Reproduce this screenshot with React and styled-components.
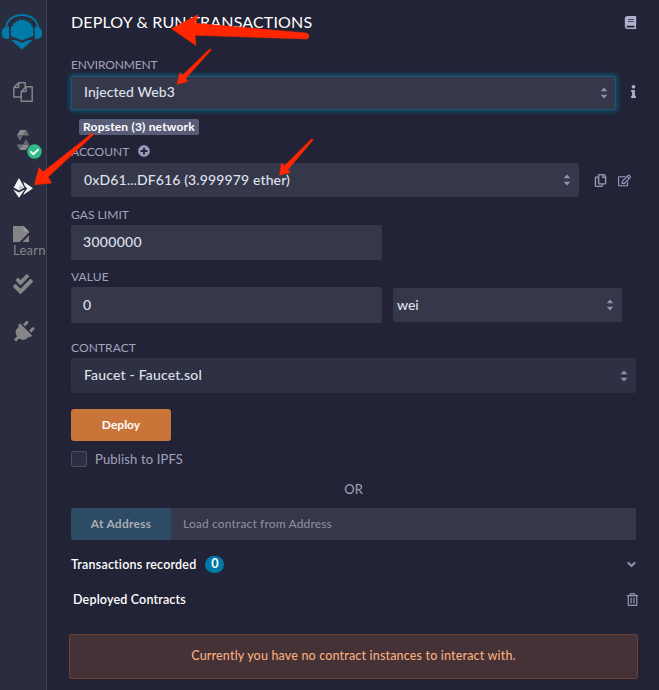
import React from 'react';
import styled, { createGlobalStyle } from 'styled-components';
import {
  FaBook,
  FaInfo,
  FaRegCopy,
  FaRegEdit,
  FaChevronDown,
  FaRegTrashAlt,
  FaPlusCircle,
  FaCheckDouble,
  FaCheckCircle,
  FaPlug,
} from 'react-icons/fa';

const GlobalStyle = createGlobalStyle`
  *, *::before, *::after { box-sizing: border-box; }
  body {
    margin: 0;
    background: #222336;
    font-family: Lato, "Open Sans", sans-serif;
    overflow: hidden;
  }
  svg { display: block; flex: none; }
`;

const Page = styled.div`
  position: relative;
  display: flex;
  width: 659px;
  height: 690px;
  background: #222336;
  color: #dfe1ea;
`;

/* Sidebar */

const Sidebar = styled.nav`
  display: flex;
  flex-direction: column;
  width: 47px;
  flex: none;
  background: #2a2c3f;
  border-right: 1px solid #3f4153;
`;

const LogoSlot = styled.div`
  height: 68px;
  padding: 13px 0 0 1px;
`;

const NavItem = styled.div`
  position: relative;
  display: flex;
  flex-direction: column;
  justify-content: ${(p) => (p.$top ? 'flex-start' : 'center')};
  height: 48px;
  padding-left: 13px;
  padding-top: ${(p) => (p.$top ? 14 : 0)}px;
  color: ${(p) => (p.$active ? '#f4f4f6' : '#858587')};
`;

const NavLabel = styled.span`
  font-size: 13px;
  line-height: 17px;
  letter-spacing: 0.25px;
  white-space: nowrap;
`;

const StatusBadge = styled.span`
  position: absolute;
  left: 27px;
  top: 28px;
  border-radius: 50%;
  color: #32ba89;
  background: radial-gradient(circle, #fff 45%, transparent 50%);
`;

const PlugIcon = styled(FaPlug)`
  transform: translateY(0.5px) rotate(45deg) scale(1.15);
`;

/* Panel */

const Panel = styled.main`
  display: flex;
  flex-direction: column;
  flex: 1;
  padding: 0 21px 0 24px;
`;

const Header = styled.header`
  display: flex;
  align-items: center;
  justify-content: space-between;
  height: 44px;
  padding-right: 3px;
  color: #aeb0cd;
`;

const Title = styled.h1`
  margin: 0;
  padding-bottom: 2px;
  font-size: 16px;
  font-weight: 400;
  letter-spacing: 0.16px;
  color: #fff;
`;

const Label = styled.div`
  display: flex;
  align-items: center;
  gap: 9px;
  height: 16px;
  margin-top: ${(p) => p.$mt || 0}px;
  margin-bottom: ${(p) => p.$mb || 0}px;
  font-size: 12px;
  letter-spacing: ${(p) => p.$ls || 0}px;
  color: #a2a3bd;
`;

const FieldRow = styled.div`
  display: flex;
  align-items: center;
  height: ${(p) => p.$h || 34}px;
`;

const Field = styled.div`
  display: flex;
  align-items: center;
  justify-content: space-between;
  width: ${(p) => p.$w}px;
  height: ${(p) => p.$h || 34}px;
  margin-left: ${(p) => p.$ml || 0}px;
  padding: 0 8px ${(p) => (p.$focus ? 3 : 2)}px ${(p) => (p.$pl === undefined ? 13 : p.$pl)}px;
  border-radius: 2px;
  background: ${(p) => (p.$dark ? '#2e3044' : '#35374b')};
  box-shadow: ${(p) => (p.$focus ? 'inset 0 0 0 1px #22536f, 0 0 4px 2px rgba(0, 122, 166, 0.5)' : 'none')};
  font-size: 14px;
  font-weight: 500;
  letter-spacing: ${(p) => p.$ls || 0}px;
  white-space: nowrap;
`;

const RowIcon = styled.span`
  display: flex;
  margin-left: ${(p) => p.$ml}px;
  margin-top: ${(p) => (p.$bright ? -3 : 0)}px;
  color: ${(p) => (p.$bright ? '#aeb0cd' : '#9297b6')};

  path {
    stroke: currentColor;
    stroke-width: ${(p) => (p.$bright ? 0 : 8)}px;
  }
`;

const NetworkBadge = styled.span`
  display: flex;
  align-items: center;
  justify-content: center;
  align-self: flex-start;
  width: 120px;
  height: 16px;
  margin: 9px 0 0 8px;
  padding-bottom: 1px;
  border-radius: 2px;
  background: #595c76;
  color: #fff;
  font-size: 12px;
  font-weight: 700;
  letter-spacing: 0.19px;
  white-space: nowrap;
`;

const DeployButton = styled.button`
  width: 100px;
  height: 32px;
  margin: 16px 0 0;
  padding: 0 0 2px;
  border: 0;
  border-radius: 3px;
  background: #c97539;
  color: #fff;
  font: 700 12px Lato, sans-serif;
`;

const CheckRow = styled.label`
  display: flex;
  align-items: center;
  gap: 8px;
  height: 16px;
  margin-top: 10px;
  font-size: 13px;
  letter-spacing: 0.16px;
  color: #a2a3bd;
`;

const Box = styled.span`
  width: 16px;
  height: 16px;
  border: 1px solid #4b4e63;
  border-radius: 2px;
  background: #2c2e42;
`;

const Or = styled.div`
  height: 16px;
  margin-top: 14px;
  padding-right: 4px;
  font-size: 13px;
  line-height: 16px;
  text-align: center;
  color: #a2a3bd;
`;

const AddressGroup = styled.div`
  display: flex;
  width: 565px;
  height: 32px;
  margin-top: 11px;
  border-radius: 2px;
  overflow: hidden;
`;

const AddressButton = styled.button`
  width: 100px;
  padding: 0 0 2px;
  border: 0;
  background: #2d4b64;
  color: #a9adb5;
  font: 700 12px Lato, sans-serif;
  letter-spacing: 0.26px;
`;

const AddressInput = styled.div`
  display: flex;
  align-items: center;
  flex: 1;
  padding: 0 0 2px 12px;
  background: #35374b;
  color: #8a8c98;
  font-size: 12px;
  font-weight: 500;
  letter-spacing: 0.13px;
`;

const SectionRow = styled.div`
  display: flex;
  align-items: center;
  height: 18px;
  margin-top: ${(p) => p.$mt}px;
  padding-left: ${(p) => p.$pl || 0}px;
  color: #fff;
  font-size: 12.5px;
  font-weight: 600;
  letter-spacing: ${(p) => p.$ls}px;
`;

const SectionIcon = styled.span`
  margin-left: auto;
  margin-right: ${(p) => p.$mr}px;
  color: #9297b6;

  path {
    stroke: currentColor;
    stroke-width: ${(p) => p.$stroke || 0}px;
  }
`;

const Count = styled.span`
  display: flex;
  align-items: center;
  justify-content: center;
  width: 19px;
  height: 17px;
  margin-left: 9px;
  padding-bottom: 1px;
  border-radius: 9px;
  background: #007aa6;
  font-size: 12.5px;
  font-weight: 700;
  letter-spacing: 0;
`;

const Alert = styled.div`
  display: flex;
  align-items: center;
  justify-content: center;
  width: 569px;
  height: 45px;
  margin: 26px 0 0 -2px;
  padding-bottom: 2px;
  border: 1px solid #6a4235;
  border-radius: 2px;
  background: #443237;
  color: #f8ad7c;
  font-size: 12.5px;
  font-weight: 500;
  letter-spacing: 0.17px;
`;

const SorterIcon = styled.svg`
  margin-top: 2px;
`;

const Overlay = styled.svg`
  position: absolute;
  inset: 0;
  pointer-events: none;
`;

function Logo() {
  return (
    <svg width="42" height="38" viewBox="1 13 42 38" fill="#007aa6">
      <path d="M6 28C7 19.500 13.500 15 22 15S37 19.500 38 28" fill="none" stroke="#007aa6" strokeWidth="1.800" />
      <path d="M9 26.800v12C4.500 39.600 1.600 37.400 1.600 33s2.900-7 7.400-6.200zM34.800 26.800v12c4.500.8 7.400-1.400 7.400-5.800s-2.900-7-7.400-6.200z" />
      <path d="M11 36.200L10.400 33.500 11.200 31.800 9.900 30.200 11.400 28.800 10.900 26.400 12.900 25.700 13.100 23.300 15.200 23.200 16 20.900 18 21.400 19.600 19.300 21.800 20.500 24 19.200 25.700 21.200 27.900 20.700 28.800 22.900 31.100 23.200 31.200 25.600 33.200 26.400 32.700 28.800 34.200 30.200 32.900 31.800 33.700 33.500 33 36.200C29.500 37.500 25.500 38.500 22 40.600 18.500 38.500 14.500 37.500 11 36.200z" />
      <path d="M11 39.800c4 .3 7.500 1 11 3 3.500-2 7-2.700 11-3L22 49.700z" />
    </svg>
  );
}

function FilesIcon() {
  return (
    <svg width="20" height="20" viewBox="0 0 20 20" fill="none" stroke="currentColor" strokeWidth="1.5" strokeLinejoin="round">
      <path d="M8 15H.8V5.600L5.600.8h6.600v4M5.600.8v4.800H.8" />
      <path d="M13 4.800h6.200v14.400H8.200V9.600zM13 4.800v4.800H8.200" />
    </svg>
  );
}

function SolidityIcon() {
  return (
    <svg width="20" height="20" viewBox="0 0 20 20">
      <path d="M7 0h6.200L10 5.600H3.800z" fill="#8b8b8d" />
      <path d="M13.200 0l3.100 5.600H10z" fill="#6f6f73" />
      <path d="M3.800 5.600H10L7 11z" fill="#66666b" />
      <path d="M13 20H6.800L10 14.400h6.300z" fill="#8b8b8d" />
      <path d="M6.800 20l-3-5.600H10z" fill="#6f6f73" />
      <path d="M16.300 14.400H10L13 9z" fill="#66666b" />
    </svg>
  );
}

function DeployIcon() {
  return (
    <svg width="20" height="20" viewBox="0 0 20 20" fill="currentColor">
      <path d="M6 0l5.300 9.500L6 12.400.7 9.500z" />
      <path d="M.2 11.400L6 14.600l5.800-3.200L6 19.800z" />
      <path d="M10.200 3.600L20 10.300l-9.700 6.600 1-2.500 3-4-2.600-2.400z" />
      <path d="M6 7v5.400l5.300-2.900z" fill="#c6c7cd" />
    </svg>
  );
}

function BrokenImage() {
  return (
    <svg width="16" height="16" viewBox="0 0 16 16" fill="currentColor">
      <path d="M0 0h10.500L16 5.500v1L6.500 16H0z" />
      <path d="M16 9.500V16H9.500z" />
      <path d="M10.500 0v5.500H16" fill="#9b9b9d" />
    </svg>
  );
}

function Sorter() {
  return (
    <SorterIcon width="8" height="12" viewBox="0 0 8 12" fill="#8e93b2">
      <path d="M4 .4L7.300 4.300H.7zM4 11.600L7.300 7.700H.7z" />
    </SorterIcon>
  );
}

function Arrows() {
  return (
    <Overlay width="659" height="690" viewBox="0 0 659 690" fill="#ff2600" stroke="#ff2600" strokeWidth="0.6" strokeLinejoin="round">
      <path d="M171.500 28.700L198 14.700l-3 8.500L306 33c3.800.6 3.800 5.700.5 5.900L195 35.200l1 10.200z" />
      <path d="M177.200 84.300l2.500-11.400 3.300 1.800L209.500 49.200c1-.8 1.900.2 1.200 1.300L185.600 78.400l2.400 2.900z" />
      <path d="M279.700 175l1.700-11.700 3.200 2.400 26.700-26.500c1-.8 2 .2 1.300 1.300l-24.800 29.200 2.500 2.700z" />
      <path d="M34.500 184.800L39 167.500l4 4.500 48.500-38.300c1.500-.8 2.200.6 1.300 1.700L48 177l3.500 6z" />
    </Overlay>
  );
}

export default function App() {
  return (
    <>
      <GlobalStyle />
      <Page>
        <Sidebar>
          <LogoSlot><Logo /></LogoSlot>
          <NavItem><FilesIcon /></NavItem>
          <NavItem>
            <SolidityIcon />
            <StatusBadge><FaCheckCircle size={15} /></StatusBadge>
          </NavItem>
          <NavItem $active><DeployIcon /></NavItem>
          <NavItem $top>
            <BrokenImage />
            <NavLabel>Learn</NavLabel>
          </NavItem>
          <NavItem><FaCheckDouble size={20} /></NavItem>
          <NavItem><PlugIcon size={20} /></NavItem>
        </Sidebar>

        <Panel>
          <Header>
            <Title>DEPLOY &amp; RUN TRANSACTIONS</Title>
            <FaBook size={13} />
          </Header>

          <Label $mt={12} $mb={4} $ls={-0.15}>ENVIRONMENT</Label>
          <FieldRow>
            <Field $w={545} $focus $ls={0.06}>Injected Web3<Sorter /></Field>
            <RowIcon $ml={11} $bright><FaInfo size={13} /></RowIcon>
          </FieldRow>
          <NetworkBadge>Ropsten (3) network</NetworkBadge>

          <Label $mt={8} $mb={4}>ACCOUNT <FaPlusCircle size={12} color="#969bbb" /></Label>
          <FieldRow>
            <Field $w={508} $ls={0.13}>0xD61...DF616 (3.999979 ether)<Sorter /></Field>
            <RowIcon $ml={15}><FaRegCopy size={13} /></RowIcon>
            <RowIcon $ml={11}><FaRegEdit size={13} /></RowIcon>
          </FieldRow>

          <Label $mt={9} $mb={3} $ls={0.05}>GAS LIMIT</Label>
          <Field $w={311} $h={35} $pl={12} $ls={0.3}>3000000</Field>

          <Label $mt={8} $mb={3} $ls={0.1}>VALUE</Label>
          <FieldRow $h={36}>
            <Field $w={311} $h={36} $pl={12}>0</Field>
            <Field $w={229} $ml={11} $pl={4}>wei<Sorter /></Field>
          </FieldRow>

          <Label $mt={16} $mb={3} $ls={0.1}>CONTRACT</Label>
          <Field $w={565} $h={35} $dark $ls={0.18}>Faucet - Faucet.sol<Sorter /></Field>

          <DeployButton>Deploy</DeployButton>
          <CheckRow><Box />Publish to IPFS</CheckRow>
          <Or>OR</Or>

          <AddressGroup>
            <AddressButton>At Address</AddressButton>
            <AddressInput>Load contract from Address</AddressInput>
          </AddressGroup>

          <SectionRow $mt={15} $ls={0.2}>
            Transactions recorded
            <Count>0</Count>
            <SectionIcon $mr={4} $stroke={50}><FaChevronDown size={9} /></SectionIcon>
          </SectionRow>
          <SectionRow $mt={17} $pl={2} $ls={0.17}>
            Deployed Contracts
            <SectionIcon $mr={1}><FaRegTrashAlt size={13} /></SectionIcon>
          </SectionRow>

          <Alert>Currently you have no contract instances to interact with.</Alert>
        </Panel>
        <Arrows />
      </Page>
    </>
  );
}
